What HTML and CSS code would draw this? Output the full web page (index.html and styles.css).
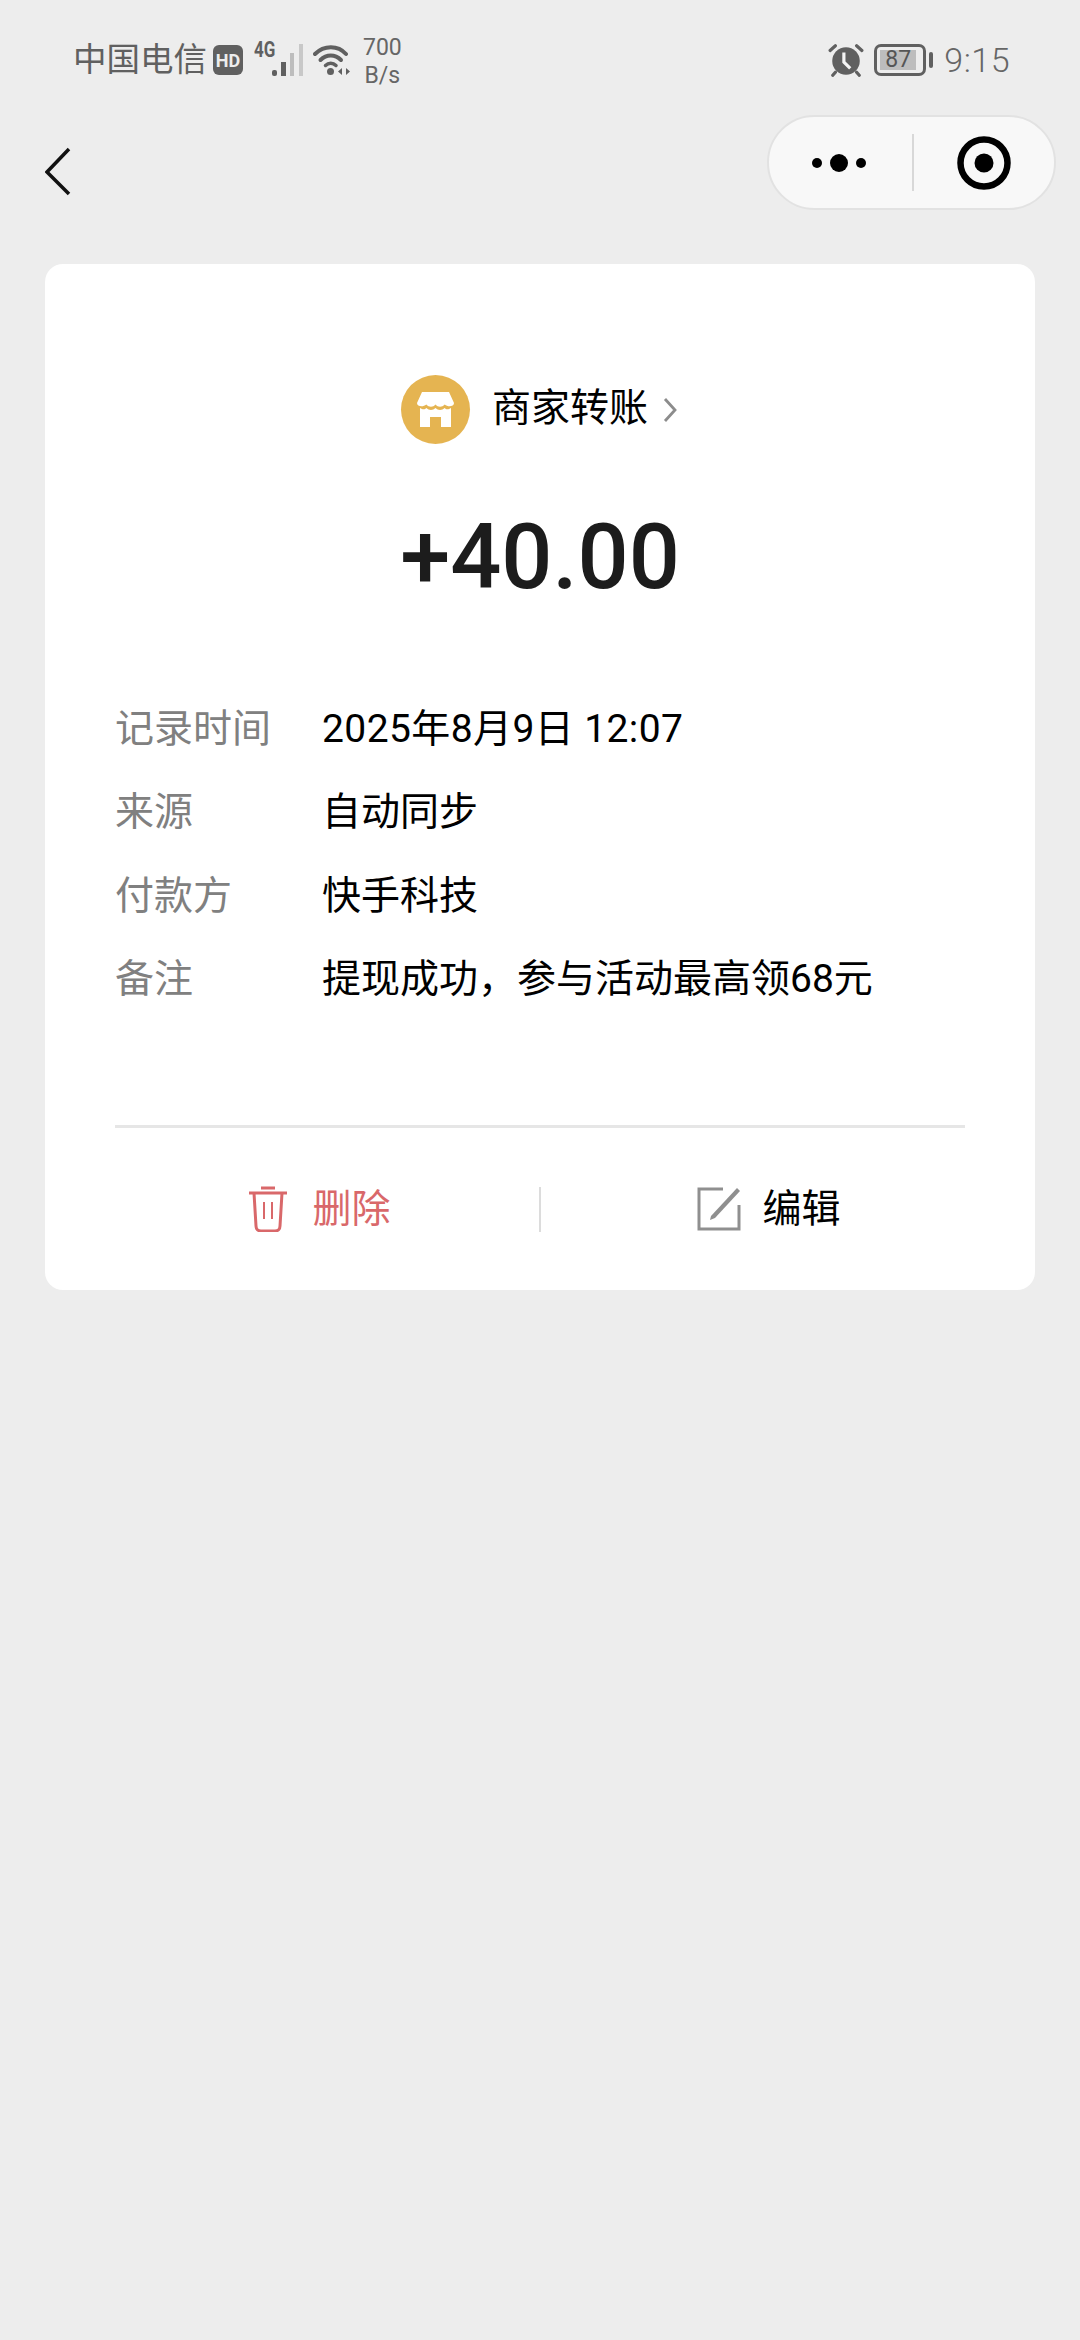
FILE: index.html
```html
<!DOCTYPE html>
<html lang="zh-CN">
<head>
<meta charset="utf-8">
<title>账单详情</title>
<link rel="stylesheet" href="styles.css">
</head>
<body>
<div class="status">
  <div class="status-left">
    <span class="carrier">中国电信</span>
    <span class="hd">HD</span>
    <span class="signal">
      <span class="net">4G</span>
      <svg class="bars" width="32" height="34" viewBox="0 0 32 34"><rect x="0" y="27" width="5" height="6" rx="2" fill="#606060"/><rect x="9" y="19" width="5" height="14" fill="#606060"/><rect x="18" y="10" width="4" height="23" fill="#bdbdbd"/><rect x="27" y="1" width="4" height="32" fill="#c8c8c8"/></svg>
    </span>
    <svg class="wifi" width="38" height="34" viewBox="0 0 38 34"><path d="M2 11C11 2 25 2 33 11" fill="none" stroke="#606060" stroke-width="4" stroke-linecap="round"/><path d="M7.500 17C13.500 11 22 11 28 17" fill="none" stroke="#606060" stroke-width="4" stroke-linecap="round"/><path d="M12.500 22.500C15.500 19.500 20 19.500 23 22.500" fill="none" stroke="#606060" stroke-width="3.500" stroke-linecap="round"/><circle cx="17.500" cy="28.500" r="3.500" fill="#606060"/><path d="M29 25v7l-4-3.500zM33 25v7l4-3.500z" fill="#606060"/></svg>
    <span class="speed"><span>700</span><span>B/s</span></span>
  </div>
  <div class="status-right">
    <svg class="alarm" width="36" height="34" viewBox="0 0 34 32"><circle cx="17" cy="17" r="13" fill="#606060"/><path d="M2 7L7 2.500M32 7L27 2.500M7 27.500L4.500 30.500M27 27.500L29.500 30.500" stroke="#606060" stroke-width="3" stroke-linecap="round"/><path d="M15 9v9l6 6" fill="none" stroke="#f4f4f4" stroke-width="3"/></svg>
    <span class="battery"><span class="battery-body"><span class="battery-fill">87</span></span><span class="battery-cap"></span></span>
    <span class="clock">9:15</span>
  </div>
</div>

<div class="nav">
  <svg class="back" width="26" height="50" viewBox="0 0 26 50"><path d="M24 2L2 25L24 47" fill="none" stroke="#111" stroke-width="3.500"/></svg>
  <div class="capsule">
    <div class="capsule-more"><i class="dot"></i><i class="dot dot-big"></i><i class="dot"></i></div>
    <div class="capsule-sep"></div>
    <div class="capsule-close"><svg width="54" height="54" viewBox="0 0 54 54"><circle cx="27" cy="27" r="23.500" fill="none" stroke="#000" stroke-width="6.500"/><circle cx="27" cy="27" r="9.500" fill="#000"/></svg></div>
  </div>
</div>

<main class="card">
  <div class="merchant">
    <span class="avatar">
      <svg width="37" height="35" viewBox="0 0 37 35"><path d="M5 0H32L37 11C37 14.500 31 15.500 27.700 12.500C25 15.500 21 15.500 18.500 12.500C16 15.500 12 15.500 9.300 12.500C6 15.500 0 14.500 0 11Z" fill="#fff"/><path d="M3 16C6 18 8 17.500 9.300 16C12 18.500 16 18.500 18.500 16C21 18.500 25 18.500 27.700 16C29 17.500 31 18 34 16V35H24V25H13V35H3Z" fill="#fff"/></svg>
    </span>
    <span class="merchant-name">商家转账</span>
    <svg class="chev" width="14" height="26" viewBox="0 0 14 26"><path d="M2 2L12 13L2 24" fill="none" stroke="#8c8c8c" stroke-width="2.800"/></svg>
  </div>
  <div class="amount">+40.00</div>
  <dl class="details">
    <div class="row"><dt>记录时间</dt><dd class="date">2025年8月9日 12:07</dd></div>
    <div class="row"><dt>来源</dt><dd>自动同步</dd></div>
    <div class="row"><dt>付款方</dt><dd>快手科技</dd></div>
    <div class="row"><dt>备注</dt><dd>提现成功，参与活动最高领68元</dd></div>
  </dl>
  <div class="actions">
    <div class="action action-del">
      <svg width="40" height="46" viewBox="0 0 40 46"><path d="M1 7H39M13 2H27M6 7L8 40C8 43 10 45 13 45H27C30 45 32 43 32 40L34 7" fill="none" stroke="#d9686a" stroke-width="3"/><path d="M16 16V33M24 16V33" fill="none" stroke="#d9686a" stroke-width="2"/></svg>
      <span class="action-text">删除</span>
    </div>
    <div class="action-sep"></div>
    <div class="action action-edit">
      <svg width="44" height="44" viewBox="0 0 44 44"><path d="M26 2H2V42H42V18" fill="none" stroke="#8f8f8f" stroke-width="3"/><path d="M14 29L40 1L43 4L18 31L13 33Z" fill="#8f8f8f"/></svg>
      <span class="action-text">编辑</span>
    </div>
  </div>
</main>
</body>
</html>
```
FILE: styles.css
```css
* { box-sizing: border-box; }
html, body { margin: 0; padding: 0; }
body {
  width: 1080px;
  height: 2340px;
  overflow: hidden;
  background: #ededed;
  font-family: Roboto, "Noto Sans CJK SC", sans-serif;
  color: #000;
}
.status {
  height: 115px;
  padding: 30px 70px 0 73px;
  display: flex;
  justify-content: space-between;
  align-items: flex-start;
  color: #606060;
}
.status-left, .status-right { display: flex; align-items: center; height: 60px; }
.carrier { font-size: 33.500px; line-height: 60px; width: 140px; white-space: nowrap; }
.hd {
  width: 30px; height: 30px; border-radius: 6px; background: #606060; color: #ededed;
  font-size: 18px; font-weight: 700; display: flex; align-items: center; justify-content: center;
}
.signal { position: relative; width: 50px; height: 34px; margin-left: 11px; display: block; }
.net { position: absolute; left: 0; top: -4px; font-size: 17px; font-weight: 700; color: #606060; transform: scaleY(1.25); }
.bars { position: absolute; left: 18px; top: 0; }
.wifi { margin-left: 9px; }
.speed { display: flex; flex-direction: column; align-items: center; margin-left: 12px; padding-top: 3px; font-size: 23px; line-height: 28px; color: #666; }
.alarm { margin-right: 10px; }
.battery { display: flex; align-items: center; }
.battery-body { width: 52px; height: 32px; border: 3px solid #606060; border-radius: 7px; padding: 3px; display: flex; }
.battery-fill { width: 36px; background: #bdbdbd; font-size: 23px; line-height: 20px; text-align: center; color: #555; }
.battery-cap { width: 4px; height: 16px; margin-left: 3px; background: #606060; border-radius: 2px; }
.clock { margin-left: 11px; font-size: 34px; font-weight: 300; color: #666; letter-spacing: 0.5px; }

.nav {
  height: 149px;
  padding: 0 24px 0 45px;
  display: flex;
  justify-content: space-between;
  align-items: flex-start;
}
.back { margin-top: 32px; }
.capsule {
  width: 289px; height: 95px; border-radius: 48px;
  background: #f8f8f8; border: 2px solid #e2e2e2;
  display: flex; align-items: center;
}
.capsule-more { width: 143px; padding-right: 3px; display: flex; align-items: center; justify-content: center; gap: 8px; }
.dot { width: 10px; height: 10px; border-radius: 50%; background: #000; display: block; }
.dot-big { width: 18px; height: 18px; }
.capsule-sep { width: 2px; height: 57px; background: #d8d8d8; }
.capsule-close { flex: 1; display: flex; justify-content: center; }
.capsule-close svg { display: block; }

.card {
  margin: 0 45px;
  height: 1026px;
  background: #fff;
  border-radius: 18px;
  padding: 111px 70px 0;
  display: flex;
  flex-direction: column;
}
.merchant { display: flex; align-items: center; justify-content: center; height: 69px; padding-right: 2px; }
.avatar { width: 69px; height: 69px; border-radius: 50%; background: #e5b451; display: flex; align-items: center; justify-content: center; }
.merchant-name { margin-left: 22px; font-size: 39px; padding-bottom: 12px; }
.chev { margin-left: 15px; }
.amount { margin-top: 60px; text-align: center; font-size: 90px; line-height: 108px; font-weight: 500; color: #1c1c1c; }
.details { margin: 71px 0 0; }
.row { display: flex; height: 83.500px; align-items: center; font-size: 39px; }
.row dt { width: 207px; color: #808080; }
.row dd { margin: 0; }
.row .date { letter-spacing: 0.4px; }
.actions {
  margin-top: 108px;
  border-top: 3px solid #e6e6e6;
  flex: 1;
  display: flex;
  align-items: center;
  justify-content: center;
}
.action { width: 424px; display: flex; align-items: center; justify-content: center; font-size: 39px; gap: 24px; }
.action-text { padding-bottom: 8px; }
.action-del { color: #d9686a; padding-right: 15px; }
.action-edit { padding-left: 32px; gap: 21px; }
.action-sep { width: 2px; height: 45px; background: #dcdcdc; }
```
